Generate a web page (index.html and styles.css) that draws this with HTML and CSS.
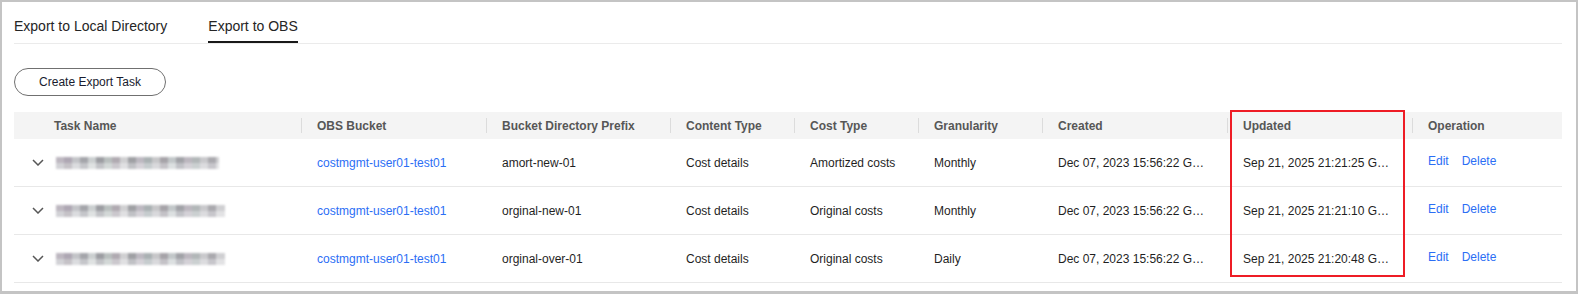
FILE: index.html
```html
<!DOCTYPE html>
<html lang="en">
<head>
    <meta charset="UTF-8">
    <meta name="viewport" content="width=device-width, initial-scale=1.0">
    <title>Export to OBS</title>
    <link rel="stylesheet" href="styles.css">
</head>
<body>
    <div class="frame">
        <div class="tabs">
            <div class="tab">Export to Local Directory</div>
            <div class="tab active">Export to OBS</div>
        </div>

        <button class="btn">Create Export Task</button>

        <table class="data-table">
            <colgroup>
                <col style="width:287px">
                <col style="width:185px">
                <col style="width:184px">
                <col style="width:124px">
                <col style="width:124px">
                <col style="width:124px">
                <col style="width:185px">
                <col style="width:185px">
                <col style="width:150px">
            </colgroup>
            <thead>
                <tr>
                    <th class="name-col">Task Name</th>
                    <th>OBS Bucket</th>
                    <th>Bucket Directory Prefix</th>
                    <th>Content Type</th>
                    <th>Cost Type</th>
                    <th>Granularity</th>
                    <th>Created</th>
                    <th>Updated</th>
                    <th>Operation</th>
                </tr>
            </thead>
            <tbody>
                <tr>
                    <td class="name-col">
                        <div class="name-cell">
                            <svg class="chevron" width="12" height="7" viewBox="0 0 12 7"><path d="M1 1l5 5 5-5" fill="none" stroke="#575757" stroke-width="1.5"/></svg>
                            <span class="blur blur-a"></span>
                        </div>
                    </td>
                    <td><a class="link">costmgmt-user01-test01</a></td>
                    <td>amort-new-01</td>
                    <td>Cost details</td>
                    <td>Amortized costs</td>
                    <td>Monthly</td>
                    <td>Dec 07, 2023 15:56:22 GMT+08:00</td>
                    <td>Sep 21, 2025 21:21:25 GMT+08:00</td>
                    <td class="ops"><div class="ops-links"><a class="link">Edit</a><a class="link">Delete</a></div></td>
                </tr>
                <tr>
                    <td class="name-col">
                        <div class="name-cell">
                            <svg class="chevron" width="12" height="7" viewBox="0 0 12 7"><path d="M1 1l5 5 5-5" fill="none" stroke="#575757" stroke-width="1.5"/></svg>
                            <span class="blur blur-b"></span>
                        </div>
                    </td>
                    <td><a class="link">costmgmt-user01-test01</a></td>
                    <td>orginal-new-01</td>
                    <td>Cost details</td>
                    <td>Original costs</td>
                    <td>Monthly</td>
                    <td>Dec 07, 2023 15:56:22 GMT+08:00</td>
                    <td>Sep 21, 2025 21:21:10 GMT+08:00</td>
                    <td class="ops"><div class="ops-links"><a class="link">Edit</a><a class="link">Delete</a></div></td>
                </tr>
                <tr>
                    <td class="name-col">
                        <div class="name-cell">
                            <svg class="chevron" width="12" height="7" viewBox="0 0 12 7"><path d="M1 1l5 5 5-5" fill="none" stroke="#575757" stroke-width="1.5"/></svg>
                            <span class="blur blur-b"></span>
                        </div>
                    </td>
                    <td><a class="link">costmgmt-user01-test01</a></td>
                    <td>orginal-over-01</td>
                    <td>Cost details</td>
                    <td>Original costs</td>
                    <td>Daily</td>
                    <td>Dec 07, 2023 15:56:22 GMT+08:00</td>
                    <td>Sep 21, 2025 21:20:48 GMT+08:00</td>
                    <td class="ops"><div class="ops-links"><a class="link">Edit</a><a class="link">Delete</a></div></td>
                </tr>
            </tbody>
        </table>

        <!-- highlight kolom Updated -->
        <div class="highlight"></div>
    </div>
</body>
</html>
```

FILE: styles.css
```css
/* Dasar halaman */
body {
    margin: 0;
    font-family: "Liberation Sans", Arial, sans-serif;
    color: #1f1f1f;
    background: #fff;
}

/* Bingkai luar abu-abu */
.frame {
    position: relative;
    box-sizing: border-box;
    width: 1578px;
    height: 294px;
    border: 2px solid #c4c4c4;
    border-bottom-width: 3px;
    padding: 0 14px 0 12px;
}

/* Tab atas */
.tabs {
    display: flex;
    gap: 41px;
    border-bottom: 1px solid #ebebeb;
}
.tab {
    position: relative;
    padding: 16px 0 9px;
    font-size: 14px;
    line-height: 16px;
    color: #252525;
}
.tab.active::after {
    content: "";
    position: absolute;
    left: 0;
    right: 0;
    bottom: 0;
    height: 2px;
    background: #191919;
}

/* Tombol */
.btn {
    display: block;
    box-sizing: border-box;
    margin-top: 24px;
    width: 152px;
    height: 28px;
    padding: 0;
    border: 1px solid #707070;
    border-radius: 14px;
    background: #fff;
    font-family: inherit;
    font-size: 12px;
    color: #191c2e;
}

/* Tabel data */
.data-table {
    margin-top: 16px;
    width: 1548px;
    table-layout: fixed;
    border-collapse: collapse;
    font-size: 12px;
}
.data-table th {
    position: relative;
    height: 27px;
    padding: 0 16px;
    background: #f4f4f4;
    color: #575757;
    font-weight: bold;
    text-align: left;
    white-space: nowrap;
}
.data-table th + th::before {
    content: "";
    position: absolute;
    left: 0;
    top: 6px;
    width: 1px;
    height: 15px;
    background: #dcdcdc;
}
.data-table td {
    height: 47px;
    padding: 0 16px;
    border-bottom: 1px solid #e8e8e8;
    white-space: nowrap;
    overflow: hidden;
    text-overflow: ellipsis;
}
.data-table .name-col {
    padding-left: 40px;
}
.data-table td.name-col {
    padding-left: 18px;
}
.name-cell {
    display: flex;
    align-items: center;
    gap: 12px;
}
.chevron {
    display: block;
    flex: none;
}

/* Nama task yang diburamkan */
.blur {
    display: block;
    height: 12px;
    filter: blur(1.2px);
    background:
        linear-gradient(to right, #bdb7c0 0 8px, #aea7b3 8px 16px, #c3c4c8 16px 24px, #a4a5aa 24px 32px, #cbcfd0 32px 40px, #9c9da2 40px 48px, #b9bfbe 48px 56px, #b0aab1 56px 64px, #d0d0d2 64px 72px, #9fa0a4 72px 80px, #bdb9c1 80px 88px, #aab1b3 88px 96px, #c7c7c9 96px 104px, #a6a3a8 104px 112px, #c2c7c9 112px 120px, #a1a2a7 120px 128px, #bcb7bf 128px 136px, #b2b7b8 136px 144px, #c9c9cc 144px 152px, #aaa9ae 152px 160px, #cfcfd2 160px) 0 0 / 100% 6px no-repeat,
        linear-gradient(to right, #d2d2d6 0 8px, #c5c2c7 8px 16px, #dbdcdf 16px 24px, #c5c6ca 24px 32px, #dfe2e2 32px 40px, #c2c3c7 40px 48px, #d3d8d7 48px 56px, #cbc8cd 56px 64px, #e0e0e2 64px 72px, #c0c1c5 72px 80px, #d5d2d8 80px 88px, #c6ccce 88px 96px, #d9d9dc 96px 104px, #c4c2c7 104px 112px, #dce0e1 112px 120px, #c1c2c7 120px 128px, #d4d1d7 128px 136px, #cbd0d1 136px 144px, #dcdcdf 144px 152px, #c7c6cb 152px 160px, #e2e2e4 160px) 0 6px / 100% 6px no-repeat;
}
.blur-a {
    width: 163px;
}
.blur-b {
    width: 169px;
}

/* Tautan */
.link {
    color: #2b6ef5;
    cursor: pointer;
}
.data-table td.ops {
    height: 43px;
    padding-bottom: 4px;
}
.ops-links {
    display: flex;
    gap: 13px;
}

/* Kotak merah penanda */
.highlight {
    position: absolute;
    left: 1228px;
    top: 108px;
    width: 175px;
    height: 167px;
    box-sizing: border-box;
    border: 2px solid #ee1c25;
}
```
